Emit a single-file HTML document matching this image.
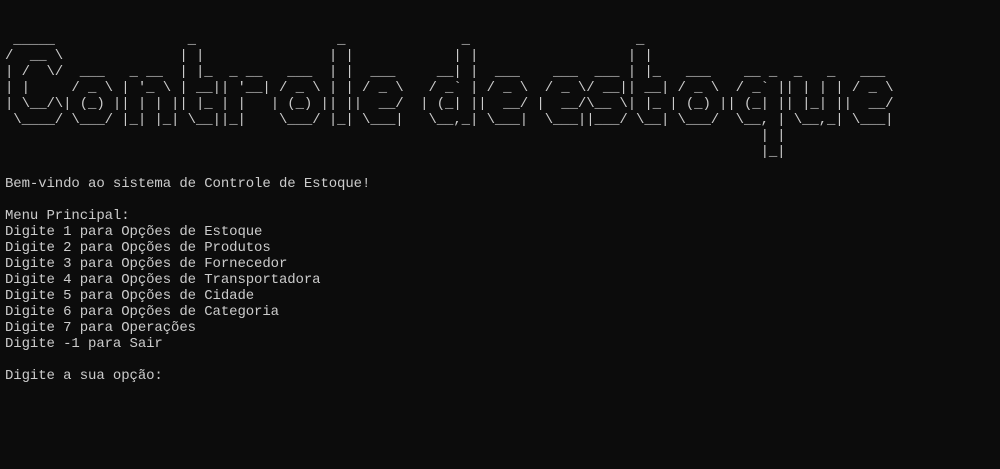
<!DOCTYPE html>
<html><head><meta charset="utf-8"><style>
html,body{margin:0;padding:0;background:#0c0c0c;width:1000px;height:469px;overflow:hidden}
.f{font-family:"Liberation Mono",monospace;font-size:14px;letter-spacing:-0.1px;line-height:16px;color:#cccccc}
#art{position:absolute;left:5px;top:32px;white-space:nowrap}
#art span{display:inline-block;white-space:pre;vertical-align:top;height:128px}
pre{margin:0;position:absolute;left:5px;top:176px;white-space:pre}
</style></head><body>
<div id="art" class="f"><span> _____ 
/  __ \
| /  \/
| |    
| \__/\
 \____/</span><span>       
       
  ___  
 / _ \ 
| (_) |
 \___/ </span><span>       
       
 _ __  
| '_ \ 
| | | |
|_| |_|</span><span> _   
| |  
| |_ 
| __|
| |_ 
 \__|</span><span>      
      
 _ __ 
| '__|
| |   
|_|   </span><span>       
       
  ___  
 / _ \ 
| (_) |
 \___/ </span><span> _ 
| |
| |
| |
| |
|_|</span><span>      
      
  ___ 
 / _ \
|  __/
 \___|</span><span>  </span><span>     _ 
    | |
  __| |
 / _` |
| (_| |
 \__,_|</span><span>      
      
  ___ 
 / _ \
|  __/
 \___|</span><span> </span><span>      
      
  ___ 
 / _ \
|  __/
 \___|</span><span>     
     
 ___ 
/ __|
\__ \
|___/</span><span> _   
| |  
| |_ 
| __|
| |_ 
 \__|</span><span>       
       
  ___  
 / _ \ 
| (_) |
 \___/ </span><span>       
       
  __ _ 
 / _` |
| (_| |
 \__, |
    | |
    |_|</span><span>       
       
 _   _ 
| | | |
| |_| |
 \__,_|</span><span>      
      
  ___ 
 / _ \
|  __/
 \___|</span></div>
<pre class="f">Bem-vindo ao sistema de Controle de Estoque!

Menu Principal:
Digite 1 para Opções de Estoque
Digite 2 para Opções de Produtos
Digite 3 para Opções de Fornecedor
Digite 4 para Opções de Transportadora
Digite 5 para Opções de Cidade
Digite 6 para Opções de Categoria
Digite 7 para Operações
Digite -1 para Sair

Digite a sua opção:</pre>
</body></html>
